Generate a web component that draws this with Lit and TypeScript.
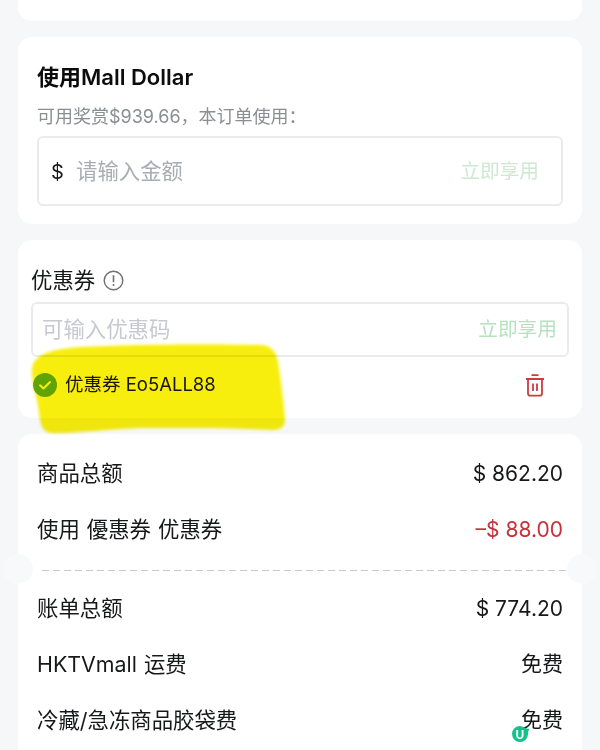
import { LitElement, html, css } from 'lit';
import { customElement } from 'lit/decorators.js';

const rows = [
  { label: '商品总额', value: '$ 862.20' },
  { label: '使用 優惠券 优惠券', value: '–$ 88.00', red: true },
];
const rows2 = [
  { label: '账单总额', value: '$ 774.20' },
  { label: 'HKTVmall 运费', value: '免费', cjk: true },
  { label: '冷藏/急冻商品胶袋费', value: '免费', cjk: true },
];

@customElement('app-root')
export class AppRoot extends LitElement {
  static styles = css`
    :host {
      display: block;
      position: relative;
      width: 600px;
      height: 750px;
      overflow: hidden;
      background: #f6f7f9;
      color: #17181a;
      font-family: Inter, 'Noto Sans CJK SC', sans-serif;
    }
    .page {
      display: flex;
      flex-direction: column;
      gap: 16px;
      padding: 0 18px;
    }
    .card {
      background: #fff;
      border-radius: 14px;
    }
    .stub {
      height: 21px;
      border-radius: 0 0 14px 14px;
    }
    .mall {
      height: 187px;
      box-sizing: border-box;
      padding: 26px 19px 0;
    }
    .mall h2 {
      margin: 0;
      font-size: 22px;
      line-height: 28px;
      font-weight: 600;
      color: #0c0c0d;
    }
    .hint {
      margin-top: 14px;
      font-size: 18px;
      line-height: 24px;
      color: #8b8e92;
    }
    .field {
      display: flex;
      align-items: center;
      box-sizing: border-box;
      border: 2px solid #e9ebee;
      border-radius: 6px;
    }
    .mall .field {
      height: 70px;
      margin-top: 7px;
      padding: 0 22px 0 12px;
    }
    .cur {
      font-size: 20px;
      width: 25px;
      padding-top: 2px;
    }
    .ph {
      flex: 1;
      font-size: 21.4px;
      color: #a9adb3;
      padding-bottom: 4px;
    }
    .apply {
      font-size: 19.7px;
      color: #cfe8d3;
      padding-bottom: 4px;
    }
    .coupon {
      height: 178px;
      box-sizing: border-box;
      padding: 26px 13px 0;
    }
    .coupon-title {
      display: flex;
      align-items: center;
      gap: 8px;
      font-size: 21.4px;
      line-height: 28px;
    }
    .coupon .field {
      height: 55px;
      margin-top: 8px;
      padding: 0 10px 0 9px;
    }
    .coupon .ph {
      color: #c6c9cd;
    }
    .coupon .apply {
      color: #b7e2c0;
    }
    .applied {
      display: flex;
      align-items: center;
      gap: 8px;
      margin-top: 14px;
      padding: 0 24px 0 2px;
      font-size: 18.5px;
      line-height: 26px;
    }
    .applied span {
      flex: 1;
      padding-bottom: 2px;
    }
    .summary {
      position: relative;
      height: 340px;
      box-sizing: border-box;
      padding: 11px 19px 0;
    }
    .row {
      display: flex;
      justify-content: space-between;
      align-items: center;
      height: 56px;
      font-size: 21.4px;
      word-spacing: 1px;
    }
    .row .lab,
    .row .cjk {
      padding-bottom: 4px;
    }
    .row .val {
      font-size: 21px;
      word-spacing: 0;
    }
    .red {
      color: #c9303a;
    }
    .divider {
      box-sizing: border-box;
      height: 27px;
      margin-top: -4px;
      padding: 17px 0 0;
    }
    .divider i {
      display: block;
      height: 1px;
      margin: 0 -8px 0 5px;
      background: repeating-linear-gradient(90deg, #c6c8cc 0 7px, transparent 7px 11px);
    }
    .notch {
      position: absolute;
      top: 120px;
      width: 30px;
      height: 30px;
      border-radius: 50%;
      background: #f8f9fb;
    }
    .notch.l {
      left: -15px;
    }
    .notch.r {
      right: -15px;
    }
    .marker {
      position: absolute;
      left: 0;
      top: 0;
      pointer-events: none;
      mix-blend-mode: multiply;
    }
    .badge {
      position: absolute;
      left: 511px;
      top: 725px;
    }
    .badge text {
      font: 700 12px Inter, sans-serif;
      fill: #fff;
    }
  `;

  renderRow(r: { label: string; value: string; red?: boolean; cjk?: boolean }) {
    return html`<div class="row">
      <span class="lab">${r.label}</span>
      <span class="val ${r.red ? 'red' : ''} ${r.cjk ? 'cjk' : ''}">${r.value}</span>
    </div>`;
  }

  render() {
    return html`
      <div class="page">
        <div class="card stub"></div>
        <div class="card mall">
          <h2>使用Mall Dollar</h2>
          <div class="hint">可用奖赏$939.66，本订单使用：</div>
          <div class="field">
            <span class="cur">$</span>
            <span class="ph">请输入金额</span>
            <span class="apply">立即享用</span>
          </div>
        </div>
        <div class="card coupon">
          <div class="coupon-title">
            优惠券
            <svg width="21" height="21" viewBox="0 0 21 21" fill="none">
              <circle cx="10.5" cy="10.5" r="9.3" stroke="#6d6f72" stroke-width="1.4" />
              <path d="M10.5 5.2v7" stroke="#6d6f72" stroke-width="1.6" />
              <circle cx="10.5" cy="15" r="1" fill="#6d6f72" />
            </svg>
          </div>
          <div class="field">
            <span class="ph">可输入优惠码</span>
            <span class="apply">立即享用</span>
          </div>
          <div class="applied">
            <svg width="24" height="24" viewBox="0 0 24 24" fill="none">
              <circle cx="12" cy="12" r="12" fill="#62b02a" />
              <path d="M7 12.3l3.5 3.2L17 9" stroke="#fff" stroke-width="2" stroke-linecap="round" stroke-linejoin="round" />
            </svg>
            <span>优惠券 Eo5ALL88</span>
            <svg width="20" height="23" viewBox="0 0 20 23" fill="none" stroke="#cf3a42" stroke-width="1.8">
              <path d="M1 5h18M6.500 1.200h7M3 5v14.500a2.200 2.200 0 0 0 2.200 2.200h9.600a2.200 2.200 0 0 0 2.200-2.200V5" stroke-linejoin="round" />
              <path d="M8 9.500v7.500M12 9.500v7.500" />
            </svg>
          </div>
        </div>
        <div class="card summary">
          ${rows.map((r) => this.renderRow(r))}
          <div class="divider"><i></i></div>
          ${rows2.map((r) => this.renderRow(r))}
          <div class="notch l"></div>
          <div class="notch r"></div>
        </div>
      </div>
      <svg class="marker" width="600" height="750" viewBox="0 0 600 750">
        <defs>
          <filter id="soft" x="-10%" y="-10%" width="120%" height="120%">
            <feGaussianBlur stdDeviation="1.5" />
          </filter>
        </defs>
        <path
          filter="url(#soft)"
          fill="#f8ee0a"
          d="M32 368C34 356 48 349 80 347C130 344 220 344 262 345C272 346 276 352 278 362C281 380 284 405 285 420C285 427 280 430 272 430C240 428 190 428 140 428C110 429 70 434 50 433C42 431 40 424 39 412C37 395 31 382 32 368Z"
        />
      </svg>
      <svg class="badge" width="20" height="20" viewBox="0 0 20 20">
        <path d="M9 1a8 8 0 1 0 8 8c0-2 .8-4 1.600-5.500C16 5 14 1.800 9 1Z" fill="#17c08a" />
        <text x="9" y="13.500" text-anchor="middle">U</text>
      </svg>
    `;
  }
}
